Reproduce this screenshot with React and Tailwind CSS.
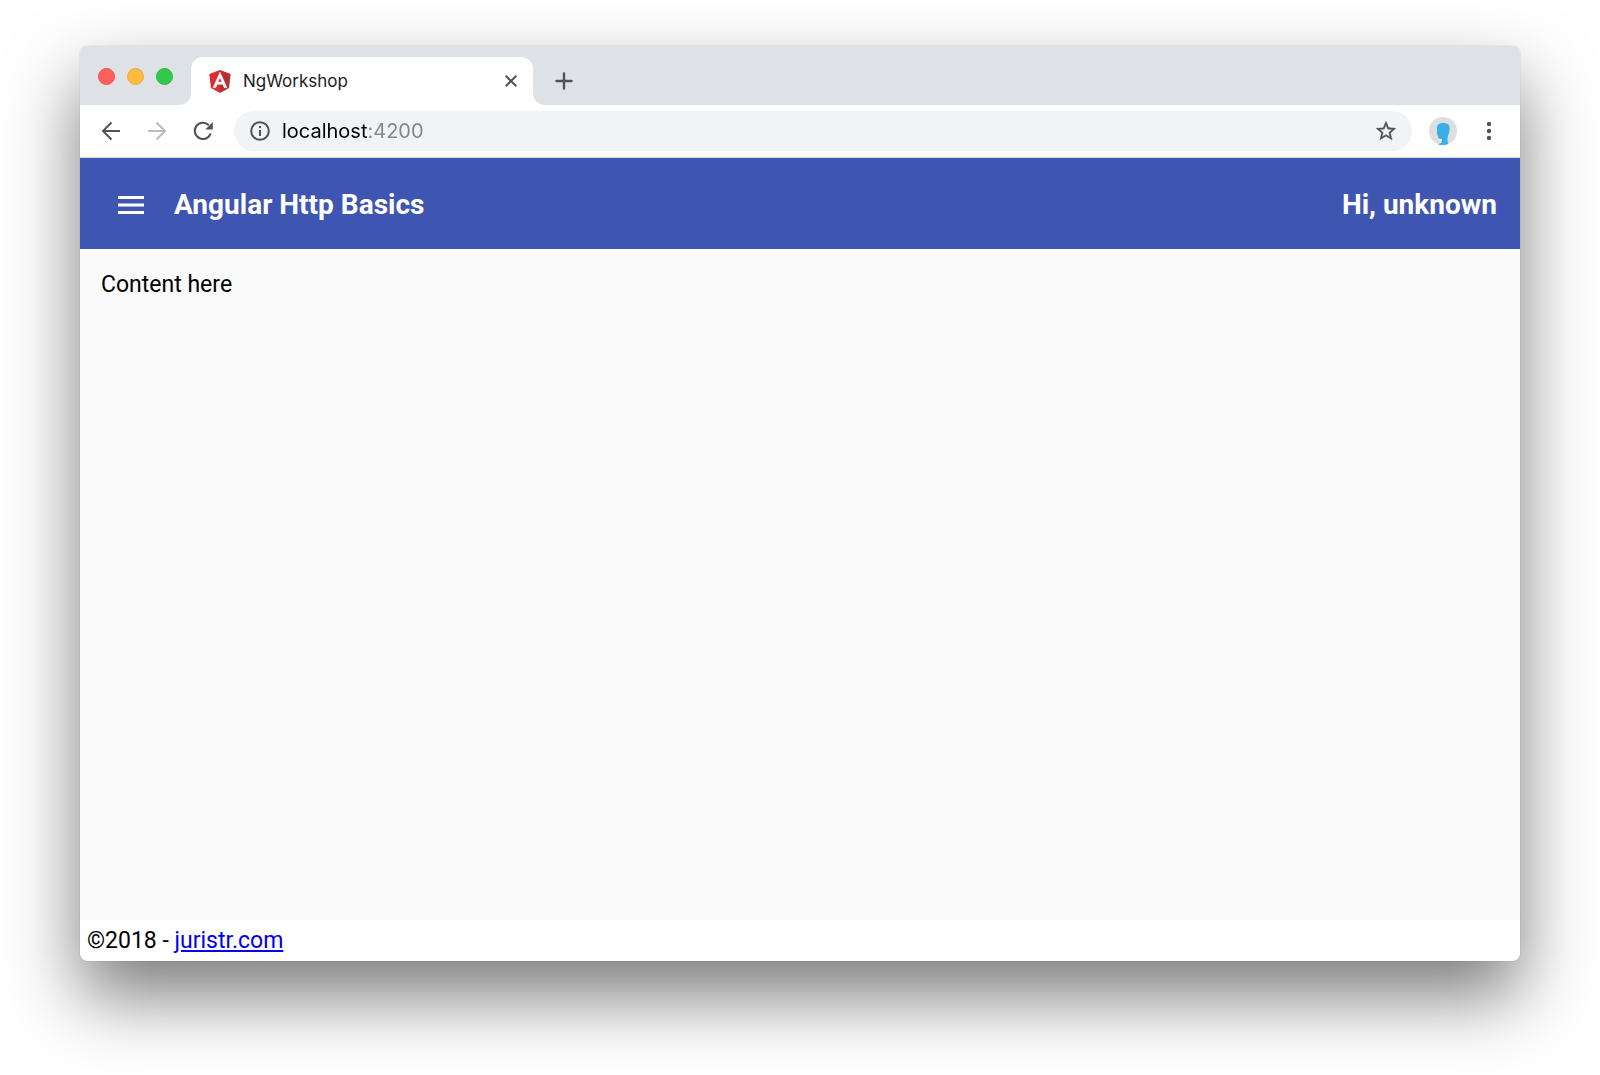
import React from 'react';

function AngularLogo() {
  return (
    <svg className="h-[23px] w-[22px] shrink-0" viewBox="25 22 200 208" preserveAspectRatio="xMidYMid meet" aria-hidden="true">
      <path fill="#dd2a33" d="M125 22 28 57l15 128 82 45z" />
      <path fill="#b52e31" d="M125 22v208l82-45 15-128z" />
      <path fill="#fff" stroke="#fff" strokeWidth="5" d="M125 42 62 182h24l13-31h52l13 31h24L125 42zm18 89h-36l18-43z" />
    </svg>
  );
}

function ArrowIcon({ flip }) {
  return (
    <svg
      className={flip ? 'size-5 rotate-180' : 'size-5'}
      viewBox="0 0 20 20"
      fill="none"
      stroke="currentColor"
      strokeWidth="2"
      aria-hidden="true"
    >
      <path d="M19 10H2.5M10.5 1.5 2 10l8.500 8.500" />
    </svg>
  );
}

function ReloadIcon() {
  return (
    <svg className="size-5" viewBox="0 0 20 20" aria-hidden="true">
      <path d="M17.600 12.500A8.100 8.100 0 1 1 15.800 4.300" fill="none" stroke="currentColor" strokeWidth="2.100" />
      <path d="M19.800 1v7.500h-7.500z" fill="currentColor" />
    </svg>
  );
}

function InfoIcon() {
  return (
    <svg className="size-5 shrink-0 text-[#505357]" viewBox="0 0 20 20" aria-hidden="true">
      <circle cx="10" cy="10" r="8.800" fill="none" stroke="currentColor" strokeWidth="2" />
      <path d="M9 9h2v6H9zM9 5h2v2H9z" fill="currentColor" />
    </svg>
  );
}

function StarIcon() {
  return (
    <svg className="size-6" viewBox="0 0 24 24" fill="currentColor" stroke="currentColor" strokeWidth="0.300" aria-hidden="true">
      <path d="M22 9.240l-7.190-.620L12 2 9.190 8.630 2 9.240l5.460 4.730L5.820 21 12 17.270 18.180 21l-1.630-7.030L22 9.240zM12 15.400l-3.760 2.270 1-4.280-3.320-2.880 4.380-.380L12 6.100l1.710 4.040 4.380.380-3.320 2.880 1 4.280L12 15.400z" />
    </svg>
  );
}

function Avatar() {
  return (
    <svg className="size-7" viewBox="0 0 28 28" aria-hidden="true">
      <circle cx="14" cy="14" r="14" fill="#dedede" />
      <path d="M10 22h3v4h-2z" fill="#efefef" />
      <path
        d="M8 11.500C8 7.500 10 6 14.500 6s6.200 2 6.200 6c0 4-2.200 6.500-2.200 9.500 0 2.300.100 4 .900 5.500A14 14 0 0 1 9 27.200c2-.400 3.500-1.200 3.800-3l.200-2.200-2.200-.300c-1.400-.200-1.600-1-1.800-2.200L8.100 17z"
        fill="#3aaeea"
      />
    </svg>
  );
}

function TabStrip() {
  return (
    <div className="flex h-[59px] bg-[#dee1e6]">
      <div className="bg-white">
        <div className="flex h-full items-center gap-3 rounded-br-[12px] bg-[#dee1e6] px-[18px] pt-[2px]">
          <button aria-label="Close window" className="size-[17px] rounded-full border border-[#ec5650] bg-[#fc605c]" />
          <button aria-label="Minimize window" className="size-[17px] rounded-full border border-[#e9ae35] bg-[#fdbc40]" />
          <button aria-label="Zoom window" className="size-[17px] rounded-full border border-[#28b93c] bg-[#34c84a]" />
        </div>
      </div>
      <div className="mt-[11px] flex w-[342px] items-center rounded-t-[12px] bg-white pr-4 pl-[18px]">
        <AngularLogo />
        <span className="ml-3 flex-1 font-[Inter,sans-serif] text-[17px] leading-6 text-[#202124]">NgWorkshop</span>
        <button aria-label="Close tab" className="text-[#505357]">
          <svg className="size-3" viewBox="0 0 12 12" stroke="currentColor" strokeWidth="2" aria-hidden="true">
            <path d="M.700.700 11.300 11.300M11.300.700.700 11.300" />
          </svg>
        </button>
      </div>
      <div className="flex-1 bg-white">
        <div className="flex h-full items-center rounded-bl-[12px] bg-[#dee1e6] pt-[11px] pl-[22px]">
          <button aria-label="New tab" className="text-[#505357]">
            <svg className="size-[18px]" viewBox="0 0 18 18" stroke="currentColor" strokeWidth="2.400" strokeLinecap="round" aria-hidden="true">
              <path d="M9 1.500v15M1.500 9h15" />
            </svg>
          </button>
        </div>
      </div>
    </div>
  );
}

function Toolbar() {
  return (
    <div className="flex h-[53px] items-center border-b border-[#d5d7dc] bg-white pr-[26px] pl-[21px]">
      <div className="flex items-center gap-[26px]">
        <button aria-label="Back" className="text-[#505357]"><ArrowIcon /></button>
        <button aria-label="Forward" className="text-[#babcbe]"><ArrowIcon flip /></button>
        <button aria-label="Reload" className="text-[#505357]"><ReloadIcon /></button>
      </div>
      <div className="ml-[21px] flex h-10 flex-1 items-center rounded-full bg-[#f1f3f4] pr-[14px] pl-4">
        <InfoIcon />
        <input
          aria-label="Address"
          defaultValue="localhost:4200"
          className="ml-3 min-w-0 flex-1 bg-[linear-gradient(90deg,#000_86px,#80868b_86px)] bg-clip-text font-[Inter,sans-serif] text-[20px] leading-7 text-transparent outline-none"
        />
        <button aria-label="Bookmark this page" className="text-[#505357]"><StarIcon /></button>
      </div>
      <button aria-label="Profile" className="ml-[17px]"><Avatar /></button>
      <button aria-label="Browser menu" className="ml-[27px] text-[#505357]">
        <svg className="h-5 w-[10px]" viewBox="0 0 10 20" fill="currentColor" aria-hidden="true">
          <circle cx="5" cy="3" r="2.200" />
          <circle cx="5" cy="10" r="2.200" />
          <circle cx="5" cy="17" r="2.200" />
        </svg>
      </button>
    </div>
  );
}

export default function App() {
  return (
    <div className="flex min-h-screen bg-white px-20 pt-[46px] pb-[114px] font-[Roboto,sans-serif]">
      <div className="flex flex-1 flex-col overflow-hidden rounded-[7px] bg-white shadow-[0_35px_73px_rgba(0,0,0,0.520),0_0_1px_rgba(0,0,0,0.400)]">
        <TabStrip />
        <Toolbar />
        <header className="flex h-[91px] items-center bg-[#3f55b2] pt-[2px] pr-[23px] pl-[38px] text-white">
          <button aria-label="Open menu">
            <svg className="h-[18px] w-[26px]" viewBox="0 0 26 18" fill="currentColor" aria-hidden="true">
              <path d="M0 0h26v3H0zM0 7.500h26v3H0zM0 15h26v3H0z" />
            </svg>
          </button>
          <h1 className="ml-[30px] flex-1 text-[28px] leading-9 font-bold">Angular Http Basics</h1>
          <span className="text-[28px] leading-9 font-bold">Hi, unknown</span>
        </header>
        <main className="flex-1 bg-[#fafafa] px-[21px] pt-[22px] text-[23px] leading-7 text-black">Content here</main>
        <footer className="flex h-[41px] items-center px-[7px] text-[23px] leading-7 text-black">
          <p>
            ©2018 - <a href="https://juristr.com" className="text-[#0000ee] underline">juristr.com</a>
          </p>
        </footer>
      </div>
    </div>
  );
}
